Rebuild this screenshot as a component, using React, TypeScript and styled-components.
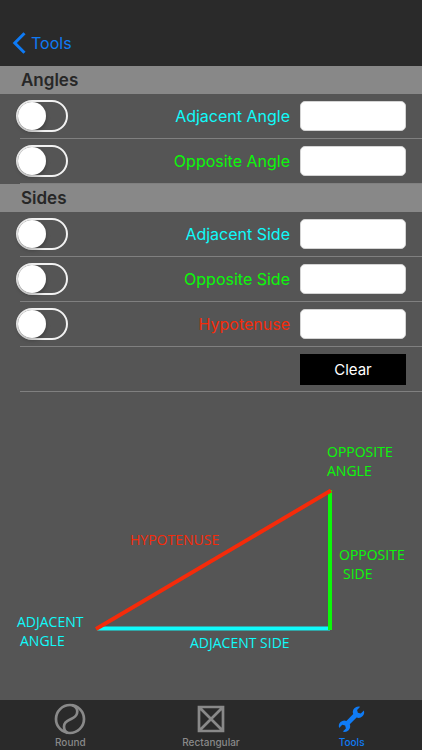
import React, { useState } from "react";
import styled, { createGlobalStyle } from "styled-components";

const color = {
  bar: "#2a2a2a",
  page: "#555555",
  section: "#888888",
  line: "#808080",
  blue: "#0f7bf5",
  cyan: "#10fafa",
  green: "#0cf80a",
  red: "#f52b0a",
};

const GlobalStyle = createGlobalStyle`
  *, *::before, *::after { box-sizing: border-box; }
  body {
    margin: 0;
    background: ${color.page};
    font-family: Inter, "Liberation Sans", sans-serif;
  }
  button, input { font: inherit; }
`;

const Screen = styled.div`
  min-height: 100vh;
  display: flex;
  flex-direction: column;
`;

const Header = styled.header`
  height: 66px;
  padding: 0 12px 11px;
  display: flex;
  align-items: flex-end;
  background: ${color.bar};
`;

const BackLink = styled.a`
  display: flex;
  align-items: center;
  gap: 5px;
  color: ${color.blue};
  font-size: 16px;
  line-height: 24px;
  text-decoration: none;
`;

const Main = styled.main`
  flex: 1;
  display: flex;
  flex-direction: column;
`;

const SectionTitle = styled.h2`
  margin: 0;
  padding: 0 21px;
  background: ${color.section};
  color: #272727;
  font-size: 17px;
  font-weight: 600;
  line-height: 28px;
`;

const Row = styled.div`
  height: 45px;
  padding: 0 16px;
  display: flex;
  align-items: center;
  gap: 10px;
  border-bottom: 1px solid;
  border-image: linear-gradient(to right, transparent 21px, ${color.line} 21px) 1;
`;

const Switch = styled.input`
  appearance: none;
  flex: none;
  width: 52px;
  height: 32px;
  margin: 0 auto 0 0;
  padding: 0;
  border: 2px solid #f2f2f2;
  border-radius: 16px;
  display: flex;
  align-items: center;
  cursor: pointer;

  &::before {
    content: "";
    width: 28px;
    height: 28px;
    border-radius: 50%;
    background: #ffffff;
    box-shadow: 0 2px 4px rgba(0, 0, 0, 0.3);
  }
  &:checked {
    justify-content: flex-end;
    background: #34c759;
  }
`;

const FieldLabel = styled.label<{ $color: string }>`
  color: ${(p) => p.$color};
  font-size: 16px;
  line-height: 24px;
`;

const Field = styled.input`
  width: 106px;
  height: 30px;
  padding: 0 8px;
  border: 1px solid #d4d4d4;
  border-radius: 5px;
  background: #ffffff;
  color: #000000;
  text-align: right;
`;

const ClearButton = styled.button`
  width: 106px;
  height: 31px;
  margin-left: auto;
  padding: 0;
  border: 0;
  background: #000000;
  color: #ffffff;
  font-size: 15px;
  cursor: pointer;
`;

const Diagram = styled.svg`
  display: block;
  width: 100%;
  height: auto;
  margin-top: auto;
  font-family: "Open Sans", "Noto Sans", sans-serif;
  font-size: 14px;
`;

const TabBar = styled.nav`
  height: 50px;
  display: grid;
  grid-template-columns: repeat(3, 1fr);
  background: ${color.bar};
`;

const Tab = styled.a<{ $active?: boolean }>`
  padding-top: 3px;
  display: flex;
  flex-direction: column;
  align-items: center;
  color: ${(p) => (p.$active ? color.blue : "#898989")};
  font-size: 10px;
  font-weight: 500;
  line-height: 14px;
  text-decoration: none;
`;

const TabIcon = styled.svg`
  width: 32px;
  height: 32px;
  fill: none;
  stroke: currentColor;
`;

type Measure = { id: string; label: string; color: string };

const angles: Measure[] = [
  { id: "adjacent-angle", label: "Adjacent Angle", color: color.cyan },
  { id: "opposite-angle", label: "Opposite Angle", color: color.green },
];

const sides: Measure[] = [
  { id: "adjacent-side", label: "Adjacent Side", color: color.cyan },
  { id: "opposite-side", label: "Opposite Side", color: color.green },
  { id: "hypotenuse", label: "Hypotenuse", color: color.red },
];

export default function App() {
  const [values, setValues] = useState<Record<string, string>>({});
  const [enabled, setEnabled] = useState<Record<string, boolean>>({});

  const renderRow = (m: Measure) => (
    <Row key={m.id}>
      <Switch
        type="checkbox"
        role="switch"
        aria-label={`Use ${m.label}`}
        checked={!!enabled[m.id]}
        onChange={(e) => setEnabled({ ...enabled, [m.id]: e.target.checked })}
      />
      <FieldLabel htmlFor={m.id} $color={m.color}>{m.label}</FieldLabel>
      <Field
        id={m.id}
        inputMode="decimal"
        value={values[m.id] ?? ""}
        onChange={(e) => setValues({ ...values, [m.id]: e.target.value })}
      />
    </Row>
  );

  const clear = () => {
    setValues({});
    setEnabled({});
  };

  return (
    <Screen>
      <GlobalStyle />
      <Header>
        <BackLink href="#tools">
          <svg width="14" height="22" viewBox="0 0 14 22" fill="none" stroke="currentColor" strokeWidth="3" aria-hidden="true">
            <path d="M12.5 1.2 2.8 11l9.7 9.8" />
          </svg>
          Tools
        </BackLink>
      </Header>
      <Main>
        <SectionTitle>Angles</SectionTitle>
        {angles.map(renderRow)}
        <SectionTitle>Sides</SectionTitle>
        {sides.map(renderRow)}
        <Row>
          <ClearButton type="button" onClick={clear}>Clear</ClearButton>
        </Row>
        <Diagram viewBox="0 0 422 308" role="img" aria-label="Right triangle with its sides and angles named">
          <g fill="none" strokeWidth="4">
            <path d="M97 236.500H330" stroke={color.cyan} />
            <path d="M330 98V238" stroke={color.green} />
            <path d="M96 237 331 98.500" stroke={color.red} />
          </g>
          <g fill={color.green}>
            <text x="327" y="65">OPPOSITE</text>
            <text x="327" y="84">ANGLE</text>
            <text x="339" y="168">OPPOSITE</text>
            <text x="343" y="187">SIDE</text>
          </g>
          <g fill={color.cyan}>
            <text x="17" y="235">ADJACENT</text>
            <text x="20" y="254">ANGLE</text>
            <text x="190" y="256">ADJACENT SIDE</text>
          </g>
          <text x="130" y="153" fill={color.red}>HYPOTENUSE</text>
        </Diagram>
      </Main>
      <TabBar>
        <Tab href="#round">
          <TabIcon viewBox="0 0 32 32" strokeWidth="2.7" aria-hidden="true">
            <circle cx="16" cy="16" r="14" />
            <path d="M18 2c4 1.500 6 5 5 8.500-1 3.500-3.500 4.300-7 6-4.500 2-6 4-6 7 0 2.500 1 5 3.500 6.500" />
          </TabIcon>
          Round
        </Tab>
        <Tab href="#rectangular">
          <TabIcon viewBox="0 0 32 32" strokeWidth="2.7" aria-hidden="true">
            <path d="M4 4h24v24H4zM4 4l24 24M28 4 4 28" />
          </TabIcon>
          Rectangular
        </Tab>
        <Tab href="#tools" $active aria-current="page">
          <TabIcon viewBox="0 0 32 32" aria-hidden="true">
            <path
              transform="translate(15.500 16.200) rotate(45)"
              fill="currentColor"
              stroke="none"
              d="M-2.600-14.900V-10.500L0-9 2.600-10.500V-14.900A5.600 5.600 0 0 1 2.400-4.800V4.800A5.600 5.600 0 0 1 2.600 14.900V10.500L0 9-2.600 10.500V14.900A5.600 5.600 0 0 1-2.400 4.800V-4.800A5.600 5.600 0 0 1-2.600-14.900Z"
            />
          </TabIcon>
          Tools
        </Tab>
      </TabBar>
    </Screen>
  );
}
